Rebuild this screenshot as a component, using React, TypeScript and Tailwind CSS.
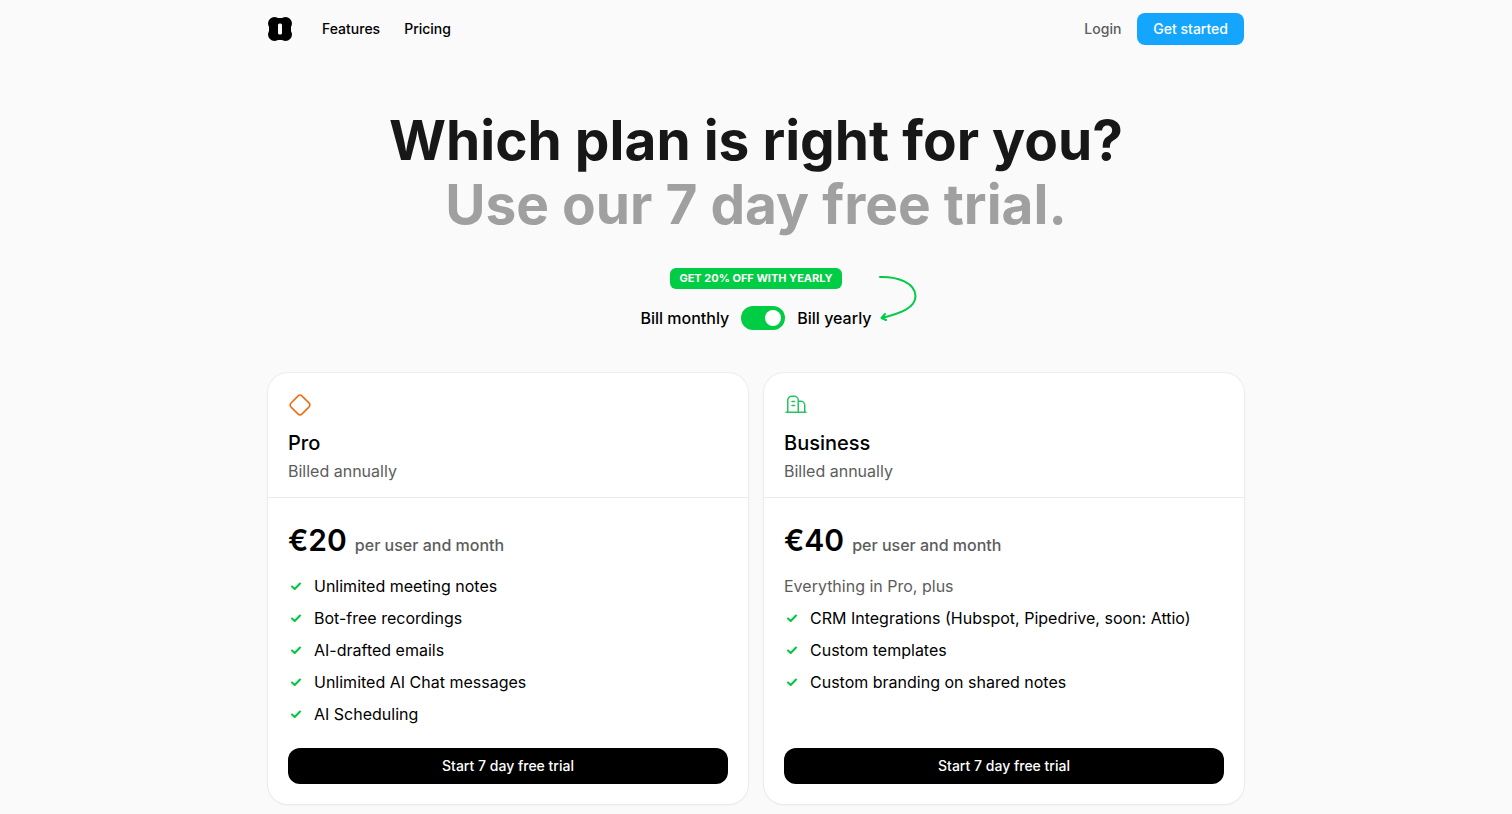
import { useState } from 'react';

type Plan = {
  name: string;
  price: string;
  icon: React.ReactNode;
  intro?: string;
  features: string[];
};

const DiamondIcon = () => (
  <svg width="24" height="24" viewBox="0 0 24 24" fill="none" stroke="#f26a0f" strokeWidth="1.5" aria-hidden="true">
    <path d="M9.9 3.100a3 3 0 0 1 4.200 0l6.800 6.800a3 3 0 0 1 0 4.200l-6.800 6.800a3 3 0 0 1-4.200 0l-6.800-6.800a3 3 0 0 1 0-4.200z" />
  </svg>
);

const BuildingIcon = () => (
  <svg
    width="24"
    height="24"
    viewBox="0 0 24 24"
    fill="none"
    stroke="#22c55e"
    strokeWidth="1.5"
    strokeLinecap="round"
    strokeLinejoin="round"
    aria-hidden="true"
  >
    <path d="M2 19.250h20M3.750 19.250v-12a4 4 0 0 1 4-4h2.500a4 4 0 0 1 4 4v12M14.250 8.250h2.500a4 4 0 0 1 4 4v7" />
    <path d="M8 8.500h2.500M8 12.500h2.500" />
  </svg>
);

const CheckIcon = () => (
  <svg
    width="16"
    height="16"
    viewBox="0 0 16 16"
    fill="none"
    stroke="#00c83c"
    strokeWidth="2"
    strokeLinecap="round"
    strokeLinejoin="round"
    className="shrink-0"
    aria-hidden="true"
  >
    <path d="M4 8.500 6.700 11 12 5.500" />
  </svg>
);

const Logo = () => (
  <svg width="24" height="24" viewBox="0 0 24 24" aria-hidden="true">
    <circle cx="6.500" cy="6.500" r="6.500" />
    <circle cx="17.500" cy="6.500" r="6.500" />
    <circle cx="6.500" cy="17.500" r="6.500" />
    <circle cx="17.500" cy="17.500" r="6.500" />
    <rect x="1" y="6" width="22" height="12" />
    <rect x="6" y="1" width="12" height="22" />
    <rect x="10" y="6.500" width="4" height="11" rx="1.500" fill="#fafafa" />
  </svg>
);

const plans: Plan[] = [
  {
    name: 'Pro',
    price: '€20',
    icon: <DiamondIcon />,
    features: [
      'Unlimited meeting notes',
      'Bot-free recordings',
      'AI-drafted emails',
      'Unlimited AI Chat messages',
      'AI Scheduling'
    ]
  },
  {
    name: 'Business',
    price: '€40',
    icon: <BuildingIcon />,
    intro: 'Everything in Pro, plus',
    features: [
      'CRM Integrations (Hubspot, Pipedrive, soon: Attio)',
      'Custom templates',
      'Custom branding on shared notes'
    ]
  }
];

export default function App() {
  const [yearly, setYearly] = useState(true);

  return (
    <div className="min-h-screen bg-[#fafafa] px-4 pb-10 font-['Inter',sans-serif] text-black">
      <div className="mx-auto w-full max-w-[976px]">
        <header className="flex items-center justify-between py-[13px] text-sm font-medium">
          <nav className="flex items-center gap-6">
            <a href="#home" aria-label="Home" className="mr-1.5">
              <Logo />
            </a>
            <a href="#features">Features</a>
            <a href="#pricing">Pricing</a>
          </nav>
          <div className="flex items-center gap-4">
            <a href="#login" className="text-[#5c5c5c]">
              Login
            </a>
            <a href="#signup" className="rounded-lg bg-[#14a6ff] px-4 py-1.5 text-white">
              Get started
            </a>
          </div>
        </header>

        <main>
          <h1 className="mt-[50px] text-center text-[55px]/[64px] font-bold text-[#171717]">
            Which plan is right for you?
            <span className="block text-[#a0a0a0]">Use our 7 day free trial.</span>
          </h1>

          <div className="mt-8 flex flex-col items-center gap-[17px]">
            <p className="rounded-md bg-[#00cc44] px-[9px] py-0.5 text-[11px]/[17px] font-bold text-white">
              GET 20% OFF WITH YEARLY
            </p>
            <div className="relative flex items-center gap-3 text-base font-medium">
              <span>Bill monthly</span>
              <button
                type="button"
                role="switch"
                aria-checked={yearly}
                aria-label="Bill yearly"
                onClick={() => setYearly(!yearly)}
                className={`flex h-6 w-11 items-center rounded-full p-1 ${yearly ? 'justify-end bg-[#00cc44]' : 'justify-start bg-[#d4d4d4]'}`}
              >
                <span className="size-4 rounded-full bg-white" />
              </button>
              <span>Bill yearly</span>
              <svg
                width="40"
                height="50"
                viewBox="0 0 40 50"
                fill="none"
                stroke="#00cc44"
                strokeWidth="2"
                strokeLinecap="round"
                strokeLinejoin="round"
                className="absolute bottom-1.5 left-full ml-2"
                aria-hidden="true"
              >
                <path d="M1 3C19 2.500 36 9 36.500 22 36.500 34 22 39 3 44M6 40 2.500 44 7 46" />
              </svg>
            </div>
          </div>

          <div className="mt-[43px] grid gap-4 md:grid-cols-2">
            {plans.map((plan) => (
              <PlanCard key={plan.name} plan={plan} yearly={yearly} />
            ))}
          </div>
        </main>
      </div>
    </div>
  );
}

const PlanCard = ({ plan, yearly }: { plan: Plan; yearly: boolean }) => {
  return (
    <section className="flex flex-col rounded-[20px] bg-white shadow-[0_0_0_1px_#ececec,0_1px_2px_#00000018]">
      <div className="border-b border-[#ebebeb] px-5 pt-5 pb-3">
        {plan.icon}
        <h2 className="mt-3 text-xl/7 font-medium">{plan.name}</h2>
        <p className="text-base/7 text-[#5c5c5c]">{yearly ? 'Billed annually' : 'Billed monthly'}</p>
      </div>
      <div className="flex grow flex-col p-5">
        <p className="mt-1 flex items-baseline gap-2 text-base/6 font-medium text-[#5c5c5c]">
          <span className="text-[30px]/[36px] font-semibold text-black">{plan.price}</span>
          per user and month
        </p>
        <div className="mt-4 mb-[22px] flex flex-col gap-2 text-base/6">
          {plan.intro && <p className="text-[#5c5c5c]">{plan.intro}</p>}
          <ul className="flex flex-col gap-2">
            {plan.features.map((feature) => (
              <li key={feature} className="flex items-center gap-2.5">
                <CheckIcon />
                {feature}
              </li>
            ))}
          </ul>
        </div>
        <button type="button" className="mt-auto rounded-xl bg-black py-2 text-sm font-medium text-white">
          Start 7 day free trial
        </button>
      </div>
    </section>
  );
};
